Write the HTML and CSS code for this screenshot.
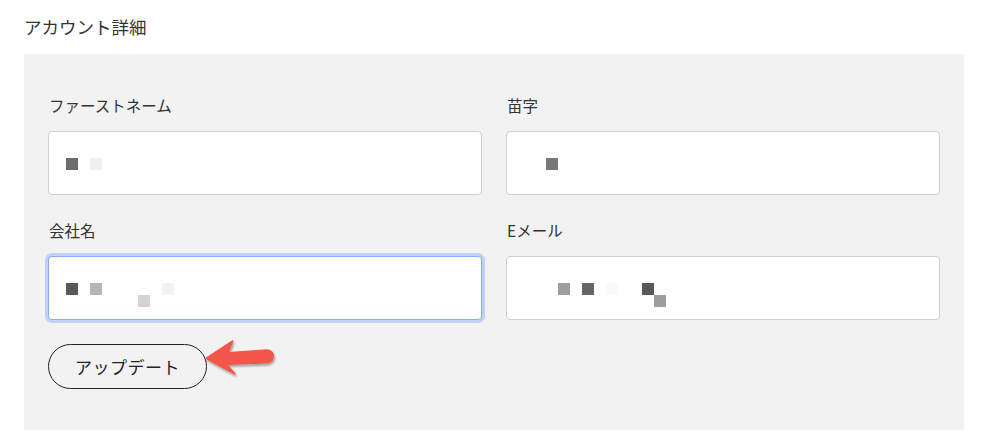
FILE: index.html
```html
<!DOCTYPE html>
<html lang="ja">
<head>
    <meta charset="UTF-8">
    <meta name="viewport" content="width=device-width, initial-scale=1.0">
    <title>アカウント詳細</title>
    <link rel="stylesheet" href="styles.css">
</head>
<body>
    <h2 class="page-title">アカウント詳細</h2>

    <form class="panel">
        <div class="fields">
            <div class="field">
                <label class="field-label">ファーストネーム</label>
                <div class="input">
                    <div class="mosaic">
                        <span class="px c-6b"></span><span class="px"></span><span class="px c-f0"></span>
                    </div>
                </div>
            </div>
            <div class="field">
                <label class="field-label">苗字</label>
                <div class="input input-alt">
                    <div class="mosaic">
                        <span class="px"></span><span class="px"></span><span class="px c-76"></span>
                    </div>
                </div>
            </div>
            <div class="field">
                <label class="field-label">会社名</label>
                <div class="input is-focused">
                    <div class="mosaic">
                        <span class="px c-55"></span><span class="px"></span><span class="px c-b4"></span>
                        <span class="px"></span><span class="px"></span><span class="px"></span>
                        <span class="px"></span><span class="px"></span><span class="px c-f2"></span>
                    </div>
                    <div class="mosaic">
                        <span class="px"></span><span class="px"></span><span class="px"></span>
                        <span class="px"></span><span class="px"></span><span class="px"></span>
                        <span class="px c-d4"></span>
                    </div>
                </div>
            </div>
            <div class="field">
                <label class="field-label">Eメール</label>
                <div class="input input-alt">
                    <div class="mosaic">
                        <span class="px"></span><span class="px"></span><span class="px"></span>
                        <span class="px c-9e"></span><span class="px"></span><span class="px c-64"></span>
                        <span class="px"></span><span class="px c-fa"></span><span class="px"></span>
                        <span class="px"></span><span class="px c-55"></span>
                    </div>
                    <div class="mosaic">
                        <span class="px"></span><span class="px"></span><span class="px"></span>
                        <span class="px"></span><span class="px"></span><span class="px"></span>
                        <span class="px"></span><span class="px"></span><span class="px"></span>
                        <span class="px"></span><span class="px"></span><span class="px c-9e"></span>
                    </div>
                </div>
            </div>
        </div>

        <div class="actions">
            <button type="button" class="update-btn">アップデート</button>
            <!-- annotation arrow -->
            <svg class="callout-arrow" width="74" height="44" viewBox="0 0 74 44">
                <defs>
                    <filter id="arrow-shadow" x="-10%" y="-10%" width="130%" height="140%">
                        <feDropShadow dx="1" dy="2" stdDeviation="1.2" flood-color="#000" flood-opacity="0.35"/>
                    </filter>
                </defs>
                <path d="M1 20.3 L27.7 3 L23.3 14.7 L62 12 A6.3 6.3 0 0 1 62 24.7 L21.7 26.3 L30 36 Z"
                      fill="#f4574b" stroke="#f4574b" stroke-width="1.5" stroke-linejoin="round"
                      filter="url(#arrow-shadow)"/>
            </svg>
        </div>
    </form>
</body>
</html>
```

FILE: styles.css
```css
body {
    margin: 0;
    padding: 0 26px 0 24px;
    font-family: "Noto Sans CJK JP", "Noto Sans", sans-serif;
    color: #333;
    background: #fff;
}

.page-title {
    margin: 0 0 14px;
    padding-top: 14px;
    font-size: 17.5px;
    font-weight: 400;
    line-height: 26px;
    color: #333;
}

.panel {
    background: #f2f2f2;
    padding: 41px 24px 41px;
    height: 376px;
    box-sizing: border-box;
}

.fields {
    display: grid;
    grid-template-columns: 1fr 1fr;
    column-gap: 24px;
    row-gap: 25px;
}

.field-label {
    display: block;
    font-size: 15.5px;
    line-height: 20px;
    margin-bottom: 16px;
    padding-left: 1px;
    color: #333;
}

.input {
    height: 64px;
    box-sizing: border-box;
    background: #fff;
    border: 1px solid #cfcfcf;
    border-radius: 4px;
    padding: 26px 17px 0;
}

.input-alt {
    padding-left: 15px;
}

.input.is-focused {
    border-color: #86acf5;
    box-shadow: 0 0 0 3px #bfd2f6;
}

.mosaic {
    display: flex;
    height: 12px;
}

.px {
    width: 12px;
    height: 12px;
    flex: none;
}

.c-55 { background: #56595c; }
.c-64 { background: #646568; }
.c-6b { background: #6b6e70; }
.c-76 { background: #76797c; }
.c-9e { background: #9e9e9e; }
.c-b4 { background: #b4b4b4; }
.c-d4 { background: #d4d4d4; }
.c-f0 { background: #f0f0f0; }
.c-f2 { background: #f2f2f2; }
.c-fa { background: #fafafa; }

.actions {
    position: relative;
    margin-top: 24px;
}

.update-btn {
    width: 159px;
    height: 45px;
    border: 1px solid #222;
    border-radius: 23px;
    background: transparent;
    font-family: inherit;
    font-size: 17px;
    color: #222;
    letter-spacing: 0.5px;
    cursor: pointer;
}

.callout-arrow {
    position: absolute;
    left: 157px;
    top: -6px;
}
```
